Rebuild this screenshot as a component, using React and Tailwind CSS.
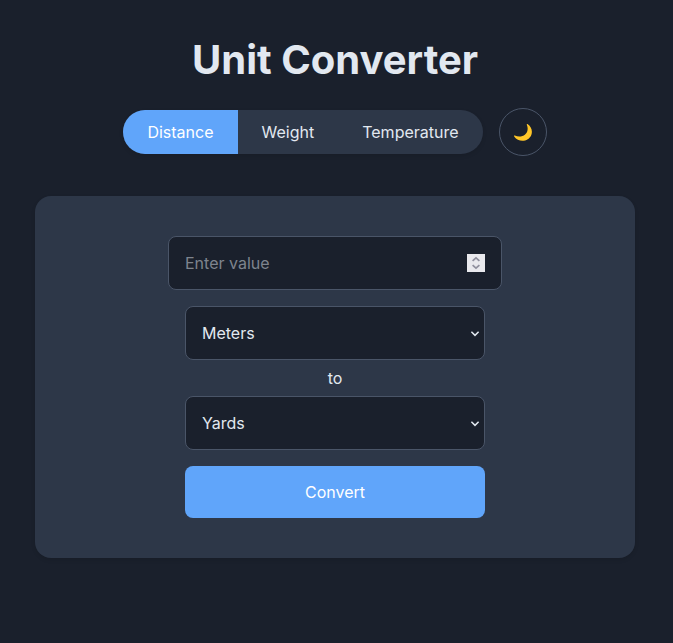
import { useState } from "react";

const TABS = ["Distance", "Weight", "Temperature"];
const UNITS = {
  Distance: ["Meters", "Yards"],
  Weight: ["Kilograms", "Pounds"],
  Temperature: ["Celsius", "Fahrenheit"],
};

function MoonIcon() {
  return (
    <svg width="20" height="20" viewBox="0 0 20 20" fill="none">
      <path
        d="M14.5 2C18.1 4.5 19.8 8.7 18.4 12.7C16.4 18.2 9.9 20.2 4.9 17.8C3.2 17 1.9 15.8 1.1 14.3C.8 13.7 1.3 13.4 1.8 13.6C5.2 15.1 9.3 15 12.1 12.5C14.9 10 15.3 6.2 13.8 2.7C13.6 2.1 14 1.7 14.5 2Z"
        fill="#ffc628"
      />
    </svg>
  );
}

function SpinnerIcon() {
  return (
    <svg
      className="shrink-0 bg-[#e9e9ed]"
      width="18"
      height="18"
      viewBox="0 0 18 18"
      fill="none"
      stroke="#8f8f9d"
      strokeWidth="1.7"
    >
      <path d="M5.6 6.8L9 3.8L12.4 6.8M5.6 11.2L9 14.2L12.4 11.2" />
    </svg>
  );
}

function UnitSelect({ options, value, onChange }) {
  return (
    <div className="grid w-[300px] items-center">
      <select
        value={value}
        onChange={(e) => onChange(e.target.value)}
        className="col-start-1 row-start-1 h-[54px] w-full appearance-none rounded-lg border border-[#4a5568] bg-[#1a202c] px-4 text-base text-[#e2e8f0] outline-none"
      >
        {options.map((o) => (
          <option key={o}>{o}</option>
        ))}
      </select>
      <svg
        className="pointer-events-none col-start-1 row-start-1 mr-[5px] justify-self-end"
        width="10"
        height="10"
        viewBox="0 0 10 10"
        fill="none"
        stroke="#e2e8f0"
        strokeWidth="1.5"
      >
        <path d="M1.4 3.8L5 7.4L8.6 3.8" />
      </svg>
    </div>
  );
}

export default function App() {
  const [tab, setTab] = useState("Distance");
  const [from, setFrom] = useState("Meters");
  const [to, setTo] = useState("Yards");
  const [value, setValue] = useState("");

  const choose = (t) => {
    setTab(t);
    setFrom(UNITS[t][0]);
    setTo(UNITS[t][1]);
  };

  return (
    <div className="min-h-screen bg-[#1a202c] font-['Inter',sans-serif] text-base text-[#e2e8f0]">
      <main className="flex w-[670px] flex-col items-center pt-9">
        <h1 className="text-[40px] leading-[48px] font-bold">Unit Converter</h1>

        <div className="mt-6 flex items-center gap-4">
          <nav className="flex h-11 overflow-hidden rounded-full bg-[#2d3748] shadow-[0_2px_4px_rgba(0,0,0,0.1)]">
            {TABS.map((t) => (
              <button
                key={t}
                onClick={() => choose(t)}
                className={
                  t === tab
                    ? "bg-[#60a5fa] px-6 text-white"
                    : "px-6 text-[#e2e8f0]"
                }
              >
                {t}
              </button>
            ))}
          </nav>
          <button
            aria-label="Toggle theme"
            className="flex size-12 items-center justify-center rounded-full border border-[#4a5568]"
          >
            <MoonIcon />
          </button>
        </div>

        <section className="mt-10 flex w-[600px] flex-col items-center rounded-2xl bg-[#2d3748] py-10 shadow-[0_2px_4px_rgba(0,0,0,0.1)]">
          <div className="flex h-[54px] w-[334px] items-center rounded-lg border border-[#4a5568] bg-[#1a202c] px-4">
            <input
              inputMode="decimal"
              value={value}
              onChange={(e) => setValue(e.target.value)}
              placeholder="Enter value"
              className="min-w-0 flex-1 bg-transparent outline-none placeholder:text-[#7e848e]"
            />
            <SpinnerIcon />
          </div>
          <div className="mt-4 flex flex-col items-center">
            <UnitSelect options={UNITS[tab]} value={from} onChange={setFrom} />
            <span className="flex h-9 items-center">to</span>
            <UnitSelect options={UNITS[tab]} value={to} onChange={setTo} />
          </div>
          <button className="mt-4 h-[52px] w-[300px] rounded-lg bg-[#60a5fa] text-white">
            Convert
          </button>
        </section>
      </main>
    </div>
  );
}
